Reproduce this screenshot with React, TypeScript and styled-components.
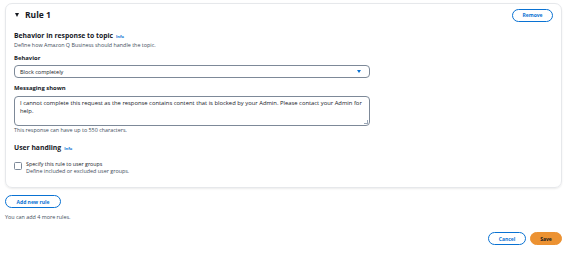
import React from 'react';
import styled, { createGlobalStyle } from 'styled-components';

const GlobalStyle = createGlobalStyle`
  html, body {
    margin: 0;
    padding: 0;
    background: #ffffff;
  }
  body {
    font-family: "Open Sans", "Liberation Sans", sans-serif;
    color: #16191f;
  }
`;

const Page = styled.div`
  display: flex;
  flex-direction: column;
  padding: 3px 5px 0 5px;
  width: 557px;
`;

const Card = styled.div`
  display: flex;
  flex-direction: column;
  border: 1px solid #e6e8eb;
  border-radius: 7px;
  box-shadow: 0 1px 2px rgba(0, 0, 0, 0.08);
  padding: 4px 8px 13px 8px;
`;

const CardHeader = styled.div`
  display: flex;
  align-items: center;
  justify-content: space-between;
  height: 14px;
`;

const RuleTitle = styled.div`
  display: flex;
  align-items: center;
  gap: 6px;
  font-size: 8.5px;
  font-weight: 700;
  line-height: 10px;
`;

const Caret = styled.span`
  width: 0;
  height: 0;
  border-left: 2.5px solid transparent;
  border-right: 2.5px solid transparent;
  border-top: 4px solid #16191f;
  margin-left: 1px;
`;

const PillButton = styled.button`
  display: flex;
  align-items: center;
  justify-content: center;
  height: 13px;
  width: ${props => props.$w}px;
  padding: 0;
  border-radius: 7px;
  border: 1px solid ${props => (props.$primary ? '#ec9232' : '#0972d3')};
  background: ${props => (props.$primary ? '#ec9232' : '#ffffff')};
  color: ${props => (props.$primary ? '#16191f' : '#0972d3')};
  font-family: inherit;
  font-size: 5px;
  font-weight: 700;
  cursor: pointer;
`;

const SectionTitle = styled.div`
  display: flex;
  align-items: baseline;
  gap: 3px;
  margin-top: ${props => props.$top}px;
  font-size: 6.8px;
  font-weight: 700;
  line-height: 9px;
`;

const InfoLink = styled.span`
  color: #0972d3;
  font-size: 4px;
  font-weight: 700;
`;

const Description = styled.div`
  font-size: 5.4px;
  line-height: 6px;
  color: #414d5c;
  margin-top: ${props => props.$top || 0}px;
`;

const Label = styled.div`
  font-size: 5.9px;
  font-weight: 700;
  line-height: 6px;
  margin-top: ${props => props.$top}px;
`;

const Select = styled.div`
  display: flex;
  align-items: center;
  justify-content: space-between;
  width: 356px;
  height: 13px;
  box-sizing: border-box;
  margin-top: 4px;
  padding: 0 8px 0 5px;
  border: 1px solid #7d8998;
  border-radius: 4px;
  font-size: 5.5px;
`;

const SelectArrow = styled.span`
  width: 0;
  height: 0;
  border-left: 2.5px solid transparent;
  border-right: 2.5px solid transparent;
  border-top: 3.5px solid #0972d3;
`;

const TextArea = styled.div`
  position: relative;
  width: 356px;
  height: 30px;
  box-sizing: border-box;
  margin-top: 5px;
  padding: 2px 5px;
  border: 1px solid #7d8998;
  border-radius: 4px;
  font-size: 5.85px;
  line-height: 8px;
`;

const ResizeGrip = styled.span`
  position: absolute;
  right: 1px;
  bottom: 1px;
  width: 3px;
  height: 3px;
  border-right: 1px solid #9ba7b6;
  border-bottom: 1px solid #9ba7b6;
`;

const CheckRow = styled.div`
  display: flex;
  gap: 4px;
  margin-top: 8px;
`;

const Checkbox = styled.span`
  width: 6px;
  height: 6px;
  margin-top: 1px;
  border: 1px solid #7d8998;
  border-radius: 1.5px;
  flex-shrink: 0;
`;

const CheckText = styled.div`
  display: flex;
  flex-direction: column;
`;

const CheckLabel = styled.div`
  font-size: 5.3px;
  line-height: 7px;
`;

const Footer = styled.div`
  display: flex;
  justify-content: flex-end;
  gap: 4px;
  margin-top: 12px;
`;

const AddRow = styled.div`
  margin-top: 7px;
`;

export default function App() {
  return (
    <>
      <GlobalStyle />
      <Page>
        <Card>
          <CardHeader>
            <RuleTitle>
              <Caret />
              Rule 1
            </RuleTitle>
            <PillButton $w={41}>Remove</PillButton>
          </CardHeader>

          <SectionTitle $top={9}>
            Behavior in response to topic <InfoLink>Info</InfoLink>
          </SectionTitle>
          <Description $top={1}>Define how Amazon Q Business should handle the topic.</Description>

          <Label $top={7}>Behavior</Label>
          <Select>
            Block completely
            <SelectArrow />
          </Select>

          <Label $top={7}>Messaging shown</Label>
          <TextArea>
            I cannot complete this request as the response contains content that is blocked by your Admin. Please contact your Admin for help.
            <ResizeGrip />
          </TextArea>
          <Description $top={1}>This response can have up to 550 characters.</Description>

          <SectionTitle $top={10}>
            User handling <InfoLink>Info</InfoLink>
          </SectionTitle>
          <CheckRow>
            <Checkbox />
            <CheckText>
              <CheckLabel>Specify this rule to user groups</CheckLabel>
              <Description>Define included or excluded user groups.</Description>
            </CheckText>
          </CheckRow>
        </Card>

        <AddRow>
          <PillButton $w={56}>Add new rule</PillButton>
        </AddRow>
        <Description $top={6}>You can add 4 more rules.</Description>

        <Footer>
          <PillButton $w={38}>Cancel</PillButton>
          <PillButton $w={32} $primary>Save</PillButton>
        </Footer>
      </Page>
    </>
  );
}
